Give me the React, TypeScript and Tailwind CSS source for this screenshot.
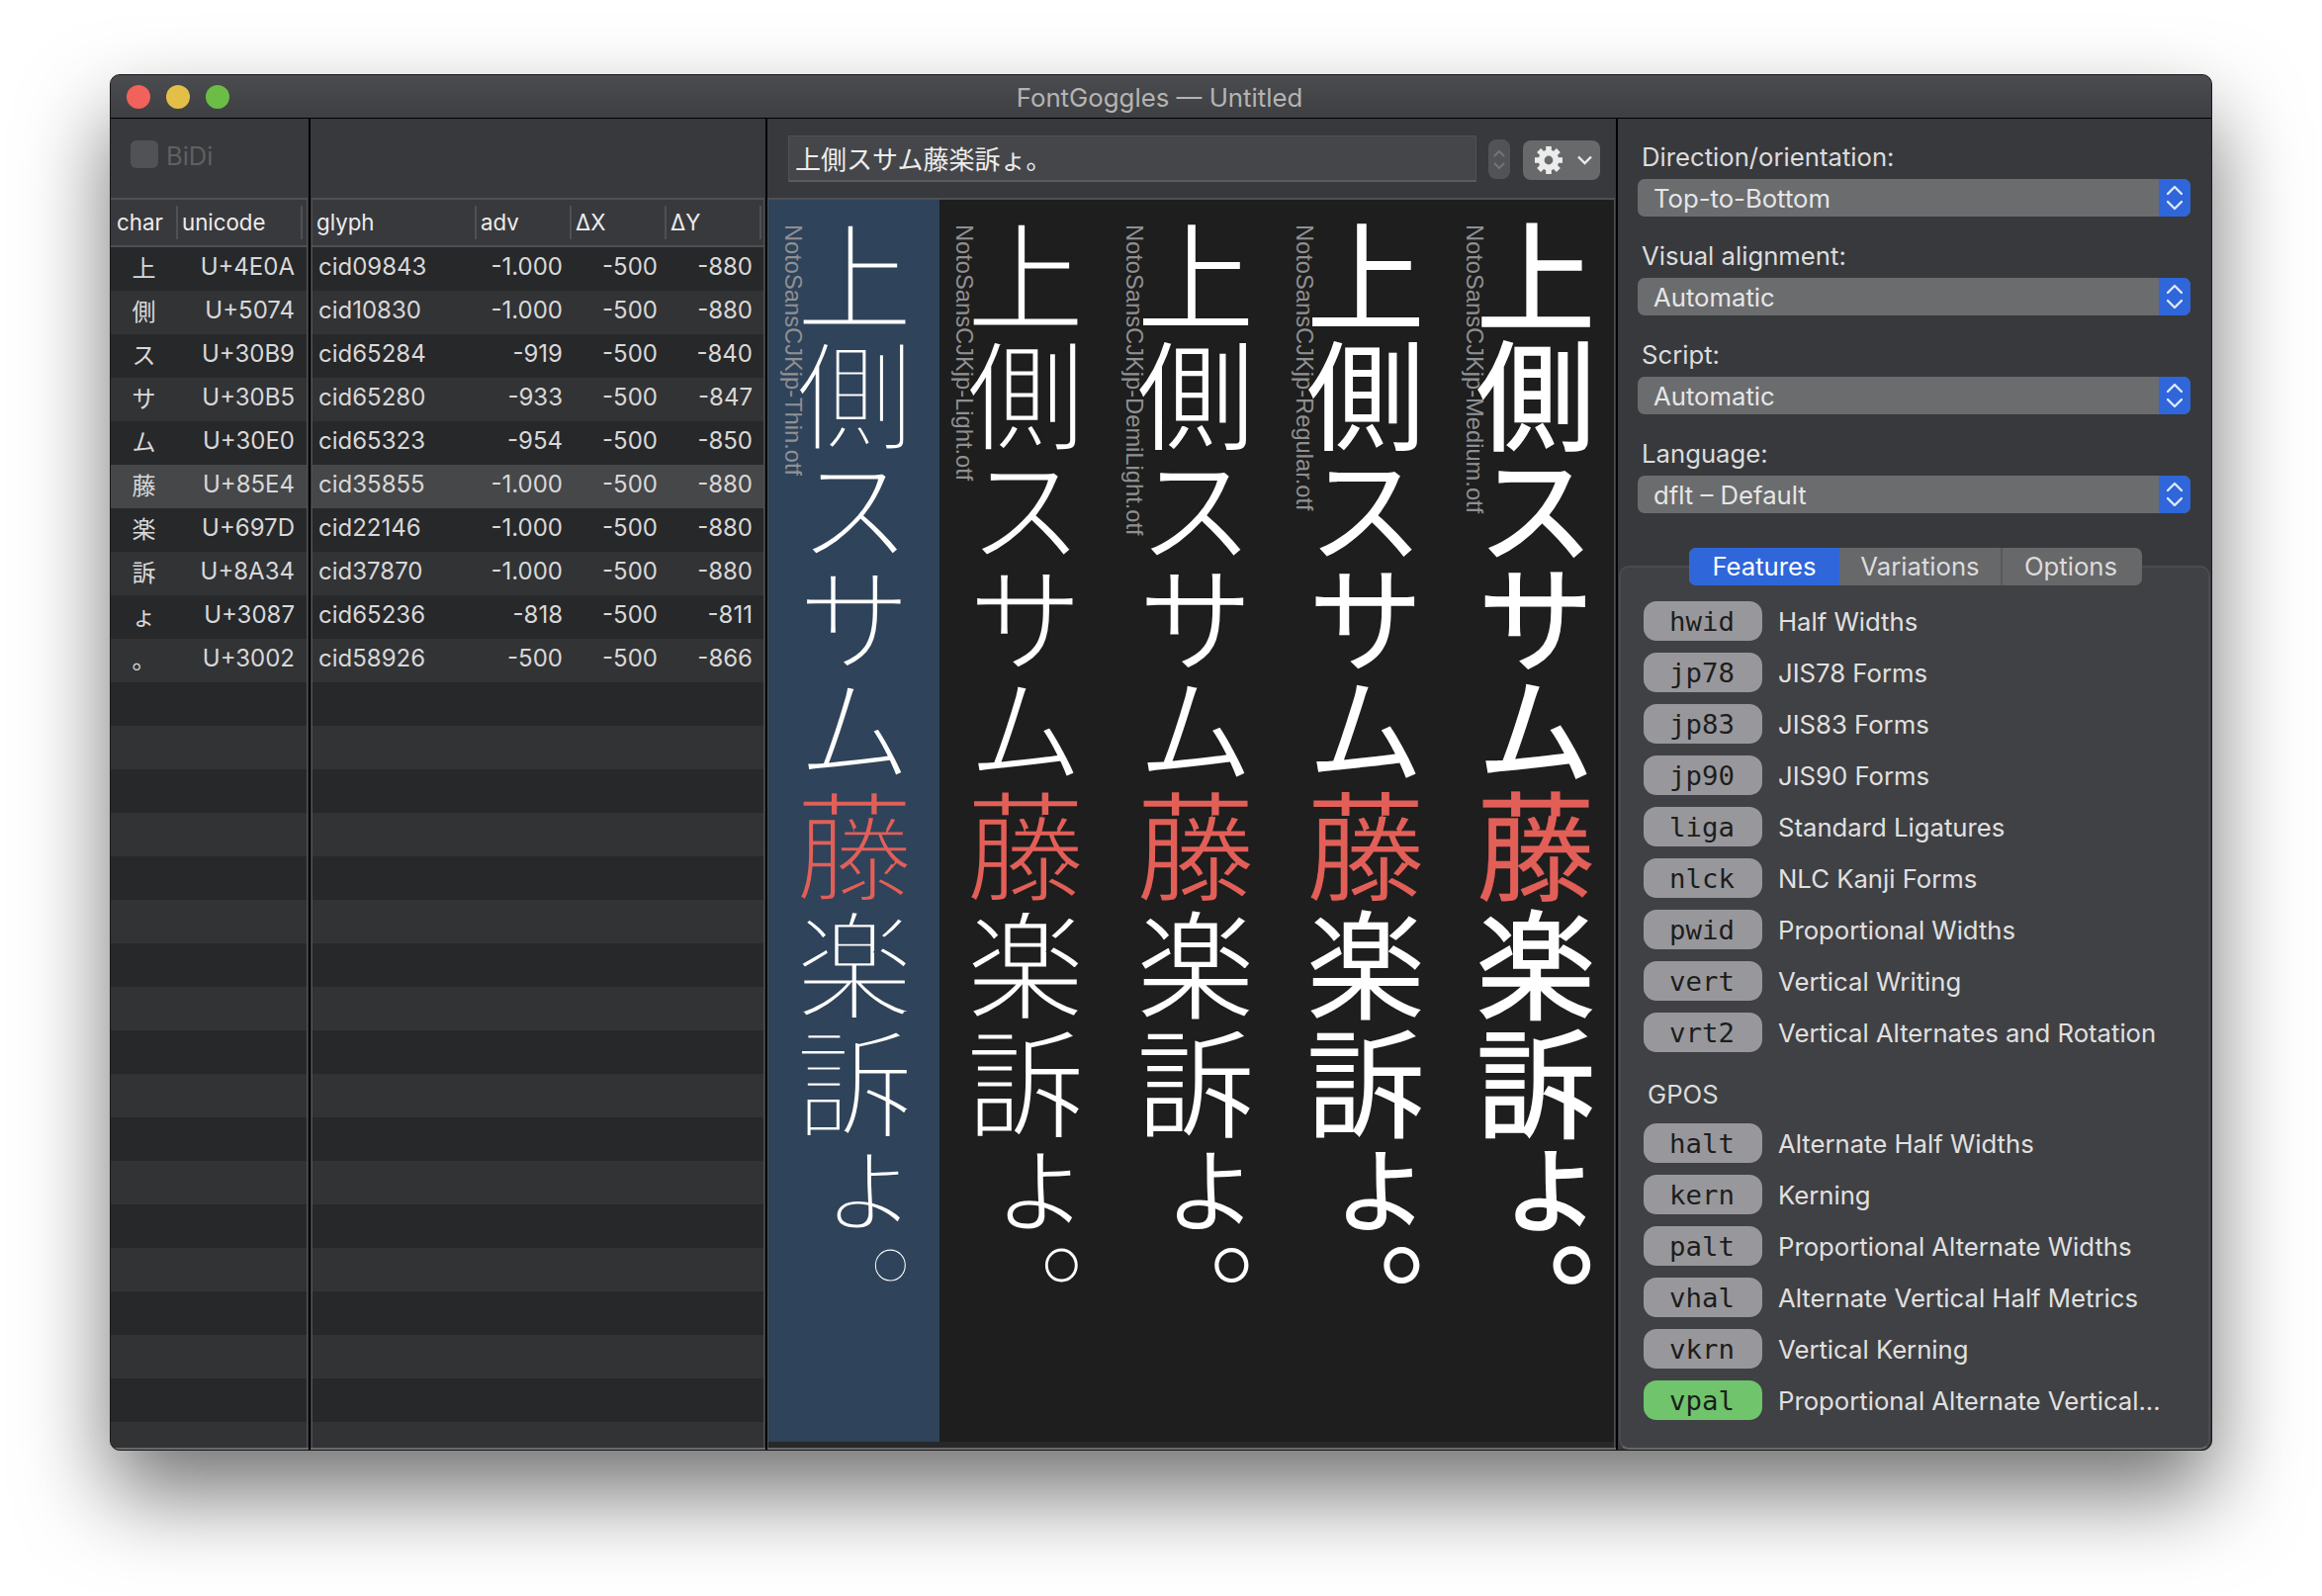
import React from "react";

const rows: [string, string, string, string, string, string][] = [
  ["上", "U+4E0A", "cid09843", "-1.000", "-500", "-880"],
  ["側", "U+5074", "cid10830", "-1.000", "-500", "-880"],
  ["ス", "U+30B9", "cid65284", "-919", "-500", "-840"],
  ["サ", "U+30B5", "cid65280", "-933", "-500", "-847"],
  ["ム", "U+30E0", "cid65323", "-954", "-500", "-850"],
  ["藤", "U+85E4", "cid35855", "-1.000", "-500", "-880"],
  ["楽", "U+697D", "cid22146", "-1.000", "-500", "-880"],
  ["訴", "U+8A34", "cid37870", "-1.000", "-500", "-880"],
  ["ょ", "U+3087", "cid65236", "-818", "-500", "-811"],
  ["。", "U+3002", "cid58926", "-500", "-500", "-866"],
];
const stripes = Array.from({ length: 28 }, (_, i) => i);

function rowBg(i: number) {
  if (i === 5) return "bg-[#464749]";
  return i % 2 === 0 ? "bg-[#27282a]" : "bg-[#323335]";
}

function HeadCell({ label, className }: { label: string; className: string }) {
  return (
    <div className={`flex h-[34px] items-center border-r-2 border-[#4f5053] ${className}`}>{label}</div>
  );
}

function Chevrons() {
  return (
    <svg width="16" height="26" viewBox="0 0 16 26" fill="none" stroke="#dfe7fb" strokeWidth="2.4" strokeLinecap="round" strokeLinejoin="round">
      <path d="M1 9 L8 2 L15 9" />
      <path d="M1 17 L8 24 L15 17" />
    </svg>
  );
}

function Gear() {
  const teeth = [0, 45, 90, 135, 180, 225, 270, 315];
  return (
    <svg width="28" height="28" viewBox="0 0 28 28">
      {teeth.map((a) => (
        <rect key={a} x="11.2" y="0" width="5.6" height="6" fill="#ececec" transform={`rotate(${a} 14 14)`} />
      ))}
      <circle cx="14" cy="14" r="7.4" fill="none" stroke="#ececec" strokeWidth="6" />
    </svg>
  );
}

function Field({ label, value }: { label: string; value: string }) {
  return (
    <div className="mb-[23px]">
      <div className="mb-[5px] h-[34px] pl-[4px] text-[25.7px] leading-[34px] text-[#dcdcdc]">{label}</div>
      <div className="flex h-[38px] overflow-hidden rounded-[7px] bg-[#6b6c6e]">
        <div className="flex-1 pt-px pl-[16px] text-[25.7px] leading-[38px] text-[#e6e6e6]">{value}</div>
        <div className="flex w-[32px] items-center justify-center bg-[#2f66d9]">
          <Chevrons />
        </div>
      </div>
    </div>
  );
}

function Feature({ tag, name, on }: { tag: string; name: string; on?: boolean }) {
  return (
    <div className="flex h-[40px] items-center">
      <div
        className={`flex h-[40px] w-[120px] shrink-0 items-center justify-center rounded-[13px] pt-px pr-[2px] text-[27.4px] text-[#1d1d1d] [font-family:'DejaVu_Sans_Mono',monospace] ${
          on ? "bg-[#6fc46c]" : "bg-[#98989c]"
        }`}
      >
        {tag}
      </div>
      <div className="ml-[16px] pt-[2px] text-[25.7px] whitespace-nowrap text-[#e0e0e0]">{name}</div>
    </div>
  );
}

const columns = [
  { label: "NotoSansCJKjp-Thin.otf", bg: "bg-[#2f435a]", w: "w-[173px]", cls: "[-webkit-text-stroke:5px_#2f435a]", red: "[-webkit-text-stroke:3.6px_#2f435a]" },
  { label: "NotoSansCJKjp-Light.otf", bg: "", w: "w-[172px]", cls: "[-webkit-text-stroke:3.2px_#1e1e1e]", red: "[-webkit-text-stroke:2.4px_#1e1e1e]" },
  { label: "NotoSansCJKjp-DemiLight.otf", bg: "", w: "w-[172px]", cls: "[-webkit-text-stroke:1.8px_#1e1e1e]", red: "[-webkit-text-stroke:1.5px_#1e1e1e]" },
  { label: "NotoSansCJKjp-Regular.otf", bg: "", w: "w-[172px]", cls: "", red: "[-webkit-text-stroke:1px_#1e1e1e]" },
  { label: "NotoSansCJKjp-Medium.otf", bg: "", w: "w-[165px]", cls: "[-webkit-text-stroke:1.6px_#ffffff]", red: "[-webkit-text-stroke:0.3px_#e25f58]" },
];

const gsub: [string, string][] = [
  ["hwid", "Half Widths"],
  ["jp78", "JIS78 Forms"],
  ["jp83", "JIS83 Forms"],
  ["jp90", "JIS90 Forms"],
  ["liga", "Standard Ligatures"],
  ["nlck", "NLC Kanji Forms"],
  ["pwid", "Proportional Widths"],
  ["vert", "Vertical Writing"],
  ["vrt2", "Vertical Alternates and Rotation"],
];
const gpos: [string, string][] = [
  ["halt", "Alternate Half Widths"],
  ["kern", "Kerning"],
  ["palt", "Proportional Alternate Widths"],
  ["vhal", "Alternate Vertical Half Metrics"],
  ["vkrn", "Vertical Kerning"],
];

export default function App() {
  return (
    <div className="h-[1614px] w-[2348px] overflow-hidden bg-white pt-[75px] pl-[111px] [font-family:Inter,'Noto_Sans_CJK_JP',sans-serif]">
      <div className="flex h-[1392px] w-[2126px] flex-col overflow-hidden rounded-[10px] border border-[#1a1a1a] bg-[#38393c] shadow-[0_44px_88px_rgba(0,0,0,0.55)]">
        {/* title bar */}
        <div className="relative flex h-[44px] shrink-0 items-center justify-center border-b border-black bg-gradient-to-b from-[#4b4c4f] to-[#3e3f42] pt-[3px]">
          <div className="absolute top-[10px] left-[16px] flex gap-[16px]">
            <div className="h-[24px] w-[24px] rounded-full bg-[#f0625a]" />
            <div className="h-[24px] w-[24px] rounded-full bg-[#e3bf48]" />
            <div className="h-[24px] w-[24px] rounded-full bg-[#6cbd45]" />
          </div>
          <div className="pr-[3px] text-[25.8px] text-[#b4b4b4]">FontGoggles — Untitled</div>
        </div>

        {/* body */}
        <div className="flex min-h-0 flex-1">
          {/* char table */}
          <div className="flex h-full w-[200px] shrink-0 flex-col overflow-hidden border-b-2 border-[#6a6a6a] pr-px">
            <div className="flex h-[80px] shrink-0 items-start pt-[22px] pl-[20px]">
              <div className="h-[28px] w-[28px] rounded-[6px] bg-[#515255]" />
              <div className="ml-[8px] pt-[2px] text-[25.5px] leading-[28px] text-[#5f6062]">BiDi</div>
            </div>
            <div className="flex min-h-0 flex-1 flex-col border-t-2 border-r border-[#4f5053]">
              <div className="flex h-[48px] shrink-0 items-center border-b-2 border-[#4f5053] text-[22.3px] text-[#ececec]">
                <HeadCell label="char" className="w-[68px] pl-[6px]" />
                <HeadCell label="unicode" className="w-[126px] pl-[4px]" />
              </div>
              <div className="min-h-0 flex-1 overflow-hidden">
                {stripes.map((i) => (
                  <div key={i} className={`flex h-[44px] items-center pb-[4px] text-[24px] text-[#d8d8d8] ${rowBg(i)}`}>
                    {rows[i] && (
                      <>
                        <div className="w-[67px] text-center text-[24px] [font-family:'Noto_Sans_CJK_JP',sans-serif]">{rows[i][0]}</div>
                        <div className="flex-1 pr-[12px] text-right">{rows[i][1]}</div>
                      </>
                    )}
                  </div>
                ))}
              </div>
            </div>
          </div>
          <div className="w-[2px] shrink-0 bg-black" />

          {/* glyph table */}
          <div className="flex h-full w-[460px] shrink-0 flex-col overflow-hidden border-b-2 border-[#6a6a6a] px-px">
            <div className="h-[80px] shrink-0" />
            <div className="flex min-h-0 flex-1 flex-col border-x border-t-2 border-[#4f5053]">
              <div className="flex h-[48px] shrink-0 items-center border-b-2 border-[#4f5053] text-[22.3px] text-[#ececec]">
                <HeadCell label="glyph" className="w-[166px] pl-[4px]" />
                <HeadCell label="adv" className="w-[96px] pl-[4px]" />
                <HeadCell label="ΔX" className="w-[96px] pl-[4px]" />
                <HeadCell label="ΔY" className="w-[96px] pl-[4px]" />
              </div>
              <div className="min-h-0 flex-1 overflow-hidden">
                {stripes.map((i) => (
                  <div key={i} className={`flex h-[44px] items-center pb-[4px] text-[24px] text-[#d8d8d8] ${rowBg(i)}`}>
                    {rows[i] && (
                      <>
                        <div className="w-[165px] pl-[6px]">{rows[i][2]}</div>
                        <div className="w-[96px] pr-[8px] text-right">{rows[i][3]}</div>
                        <div className="w-[96px] pr-[8px] text-right">{rows[i][4]}</div>
                        <div className="w-[99px] pr-[11px] text-right">{rows[i][5]}</div>
                      </>
                    )}
                  </div>
                ))}
              </div>
            </div>
          </div>
          <div className="w-[2px] shrink-0 bg-black" />

          {/* canvas */}
          <div className="flex h-full w-[858px] shrink-0 flex-col overflow-hidden border-b-2 border-[#6a6a6a] pr-px">
            <div className="flex h-[80px] shrink-0 items-start pl-[21px]">
              <div className="mt-[17px] flex h-[47px] w-[696px] items-center border border-b-2 border-[#4f5053] border-b-[#5a5b5e] bg-[#454649] pb-[2px] pl-[6px] text-[26px] text-[#ececec] [font-family:'Noto_Sans_CJK_JP',sans-serif]">
                上側スサム藤楽訴ょ。
              </div>
              <div className="mt-[21px] ml-[12px] flex h-[40px] w-[22px] flex-col items-center justify-center gap-[5px] rounded-[8px] bg-[#525356]">
                <svg width="12" height="8" viewBox="0 0 12 8" fill="none" stroke="#737478" strokeWidth="2">
                  <path d="M1 7 L6 2 L11 7" />
                </svg>
                <svg width="12" height="8" viewBox="0 0 12 8" fill="none" stroke="#737478" strokeWidth="2">
                  <path d="M1 1 L6 6 L11 1" />
                </svg>
              </div>
              <div className="mt-[22px] ml-[13px] flex h-[40px] w-[78px] items-center rounded-[8px] bg-[#68696b] pl-[12px]">
                <Gear />
                <svg className="ml-[15px]" width="15" height="10" viewBox="0 0 15 10" fill="none" stroke="#ececec" strokeWidth="2.4">
                  <path d="M1 1.5 L7.5 8 L14 1.5" />
                </svg>
              </div>
            </div>
            <div className="flex min-h-0 flex-1 flex-col border-x border-t-2 border-[#4f5053] bg-[#27282a]">
              <div className="flex min-h-0 flex-1 bg-[#1e1e1e]">
                {columns.map((c) => (
                  <div key={c.label} className={`relative h-full shrink-0 ${c.w} ${c.bg}`}>
                    <div className="absolute top-[25px] left-[13px] z-10 text-[23.7px] leading-[24px] whitespace-nowrap text-[#8f9092] [font-family:'Liberation_Sans',sans-serif] [writing-mode:vertical-rl]">
                      {c.label}
                    </div>
                    <div className="pt-[18px] pl-[27px]">
                      <div className={`text-[120px] leading-[120px] whitespace-nowrap text-white [font-family:'Noto_Sans_CJK_JP',sans-serif] [font-feature-settings:'vpal'] [writing-mode:vertical-rl] ${c.cls}`}>
                        上側スサム<span className={`text-[#e25f58] ${c.red}`}>藤</span>楽訴ょ。
                      </div>
                    </div>
                  </div>
                ))}
              </div>
              <div className="h-[6px] shrink-0" />
            </div>
          </div>
          <div className="w-[2px] shrink-0 bg-black" />

          {/* options */}
          <div className="flex h-full min-w-0 flex-1 flex-col pt-[22px]">
            <div className="pr-[21px] pl-[20px]">
              <Field label="Direction/orientation:" value="Top-to-Bottom" />
              <Field label="Visual alignment:" value="Automatic" />
              <Field label="Script:" value="Automatic" />
              <Field label="Language:" value="dflt – Default" />
            </div>
            <div className="relative z-10 mt-[12px] ml-[72px] flex h-[38px] w-[458px] shrink-0 overflow-hidden rounded-[7px] bg-[#67686a] text-center text-[25.7px] leading-[38px] text-[#dcdcdc]">
              <div className="w-[152px] bg-[#2f66d9] text-white">Features</div>
              <div className="w-[165px] border-r-2 border-[#58595b]">Variations</div>
              <div className="flex-1 pr-[3px]">Options</div>
            </div>
            <div className="mx-px -mt-[20px] flex min-h-0 flex-1 flex-col gap-[12px] rounded-[10px] border-2 border-[#4a4b4e] border-b-[#6a6a6a] bg-[#404144] pt-[34px] pl-[23px]">
              {gsub.map(([t, n]) => (
                <Feature key={t} tag={t} name={n} />
              ))}
              <div className="h-[48px] pt-[14px] pl-[4px] text-[25.7px] leading-[34px] text-[#dcdcdc]">GPOS</div>
              {gpos.map(([t, n]) => (
                <Feature key={t} tag={t} name={n} />
              ))}
              <Feature tag="vpal" name="Proportional Alternate Vertical..." on />
            </div>
          </div>
        </div>
      </div>
    </div>
  );
}
